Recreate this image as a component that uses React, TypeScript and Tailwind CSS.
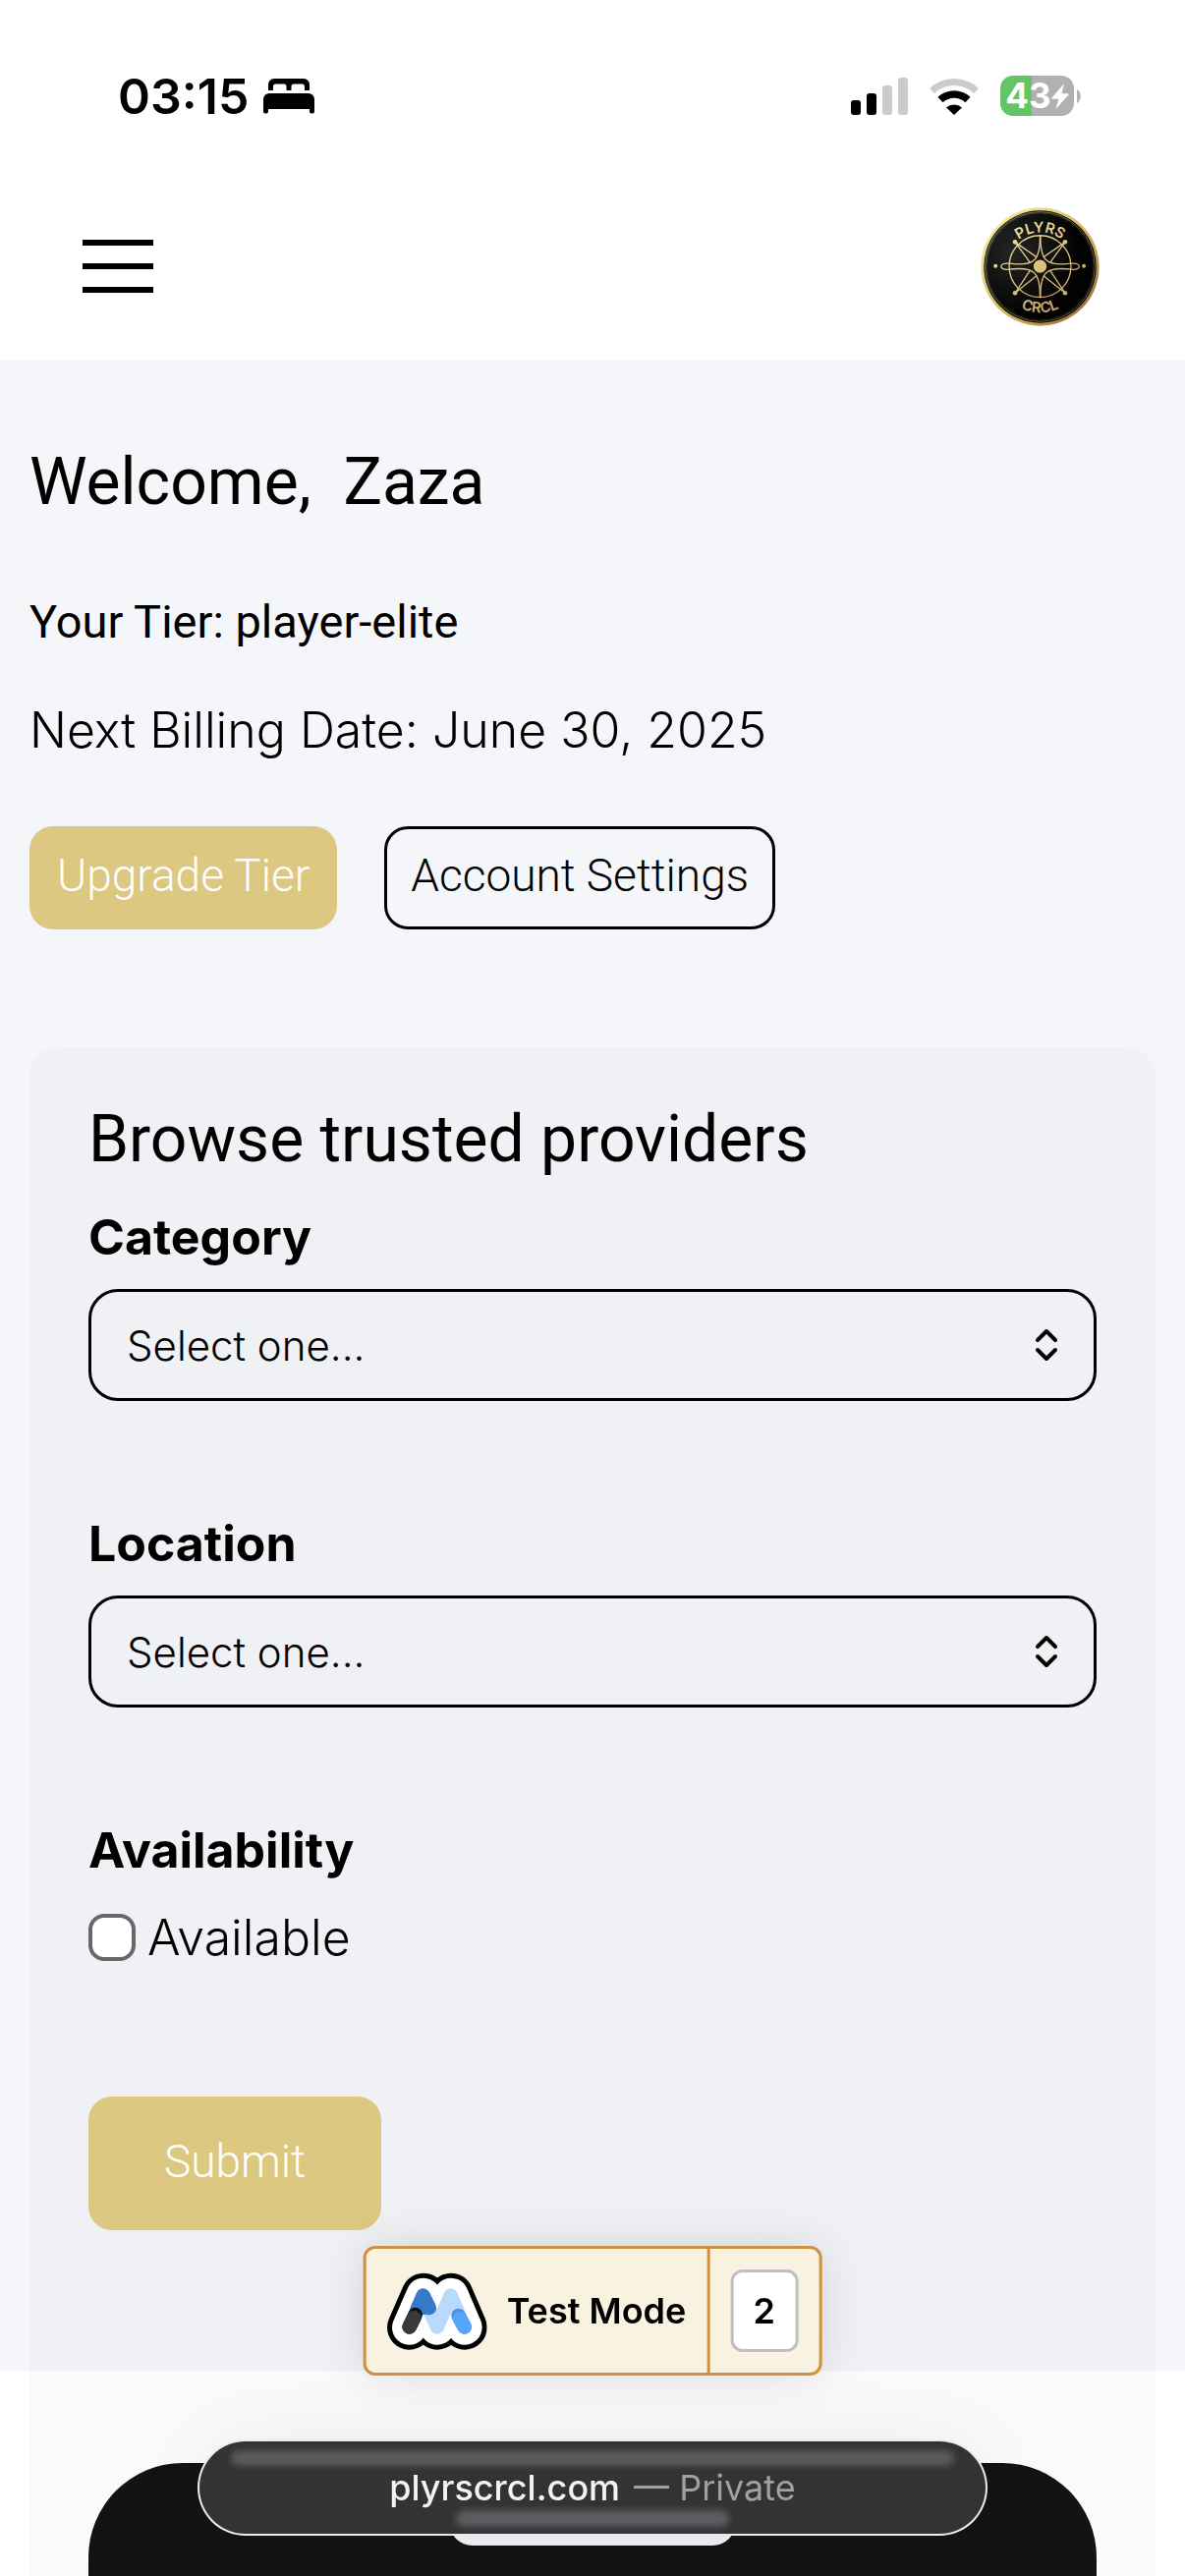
import React from "react";

function BedIcon() {
  return (
    <svg viewBox="0 0 52 36" className="h-9 w-[52px]" aria-hidden="true">
      <path d="M5 12V6a6 6 0 0 1 6-6h30a6 6 0 0 1 6 6v6h-5V8a2.500 2.500 0 0 0-2.500-2.500H31A2.500 2.500 0 0 0 28.500 8v4h-5V8A2.500 2.500 0 0 0 21 5.500h-8.500A2.500 2.500 0 0 0 10 8v4z" />
      <path d="M0 33.500V21a6 6 0 0 1 6-6h40a6 6 0 0 1 6 6v12.500a2 2 0 0 1-2 2h-1a2 2 0 0 1-2-2V31H5v2.500a2 2 0 0 1-2 2H2a2 2 0 0 1-2-2z" />
    </svg>
  );
}

function SignalIcon() {
  return (
    <svg viewBox="0 0 58 38" className="h-[38px] w-[58px]" aria-hidden="true">
      <rect x="0" y="23" width="10" height="15" rx="3" />
      <rect x="16" y="16" width="10" height="22" rx="3" />
      <rect x="32" y="8" width="10" height="30" rx="3" fill="#cbcbcb" />
      <rect x="48" y="0" width="10" height="38" rx="3" fill="#cbcbcb" />
    </svg>
  );
}

function WifiIcon() {
  return (
    <svg viewBox="0 0 52 38" className="h-[38px] w-[52px]" aria-hidden="true">
      <path d="M3.500 13.500A32.500 32.500 0 0 1 48.500 13.500" fill="none" stroke="#cbcbcb" strokeWidth="7" />
      <path d="M12 22.500A20.500 20.500 0 0 1 40 22.500" fill="none" stroke="#000" strokeWidth="7.500" />
      <path d="M18 30.500a12 12 0 0 1 16 0L26 38z" />
    </svg>
  );
}

function Battery() {
  return (
    <div className="flex items-center gap-[3px]">
      <div className="flex h-[41px] w-[75px] items-center justify-center rounded-[13px] bg-[linear-gradient(to_right,#65c466_43%,#b1b1b1_43%)] text-[35px] leading-none font-bold text-white">
        43
        <svg viewBox="0 0 18 26" className="h-[26px] w-[18px]" fill="#fff" aria-hidden="true">
          <path d="M13 0 .5 14.500a.7.7 0 0 0 .5 1.200h6.500L4.500 26 17.500 11.500a.7.7 0 0 0-.5-1.200h-6.500z" />
        </svg>
      </div>
      <svg viewBox="0 0 4 14" className="h-[14px] w-1" fill="#b1b1b1" aria-hidden="true">
        <path d="M0 0c5 2.500 5 11.500 0 14z" />
      </svg>
    </div>
  );
}

function CompassLogo() {
  const dots = [
    [131, 136], [285, 136], [131, 293], [285, 293],
  ];
  return (
    <svg viewBox="26 29 364 366" className="size-[121px]" role="img" aria-label="PLYRS CRCL">
      <defs>
        <linearGradient id="rim" x1="0" y1="0" x2="1" y2="1">
          <stop offset="0" stopColor="#fff6a8" />
          <stop offset="0.35" stopColor="#e3cf7c" />
          <stop offset="0.65" stopColor="#c8a65a" />
          <stop offset="1" stopColor="#7d5c2e" />
        </linearGradient>
        <linearGradient id="gold" gradientUnits="userSpaceOnUse" x1="80" y1="70" x2="330" y2="350">
          <stop offset="0" stopColor="#f7ecae" />
          <stop offset="0.5" stopColor="#dcc27c" />
          <stop offset="1" stopColor="#c09c58" />
        </linearGradient>
        <radialGradient id="disc" cx="0.25" cy="0.35" r="0.6">
          <stop offset="0" stopColor="#242424" />
          <stop offset="1" stopColor="#020202" />
        </radialGradient>
        <path id="arcTop" d="M101 213a107 107 0 0 1 214 0" />
        <path id="arcBottom" d="M66 211a142 142 0 0 0 284 0" />
      </defs>
      <circle cx="208" cy="212" r="182" fill="url(#rim)" />
      <circle cx="208" cy="212" r="173" fill="url(#disc)" />
      <circle cx="208" cy="212" r="169" fill="none" stroke="url(#gold)" strokeWidth="1.500" />
      <circle cx="208" cy="212" r="165" fill="none" stroke="url(#gold)" strokeWidth="1" opacity="0.6" />
      <g fill="none" stroke="url(#gold)" strokeWidth="4">
        <circle cx="208" cy="211" r="95" />
        <path d="M208 117C208 188 196 212 112 202C80 198 80 224 112 220C196 210 208 234 208 305" />
        <path d="M209 117C209 188 221 212 304 202C337 198 337 224 304 220C221 210 209 234 209 305" />
        <path d="M131 136 198 183M131 136 178 200M285 136 218 183M285 136 238 200M131 293 198 239M131 293 178 222M285 293 218 239M285 293 238 222" />
      </g>
      <g fill="url(#gold)">
        {dots.map(([x, y]) => (
          <circle key={`${x}-${y}`} cx={x} cy={y} r="7" />
        ))}
        <circle cx="71" cy="210" r="6" />
        <circle cx="343" cy="210" r="6" />
        <circle cx="208" cy="211" r="20" />
        <text fontSize="45" fontWeight="600" textAnchor="middle">
          <textPath href="#arcTop" startOffset="50%">PLYRS</textPath>
        </text>
        <text fontSize="45" fontWeight="600" textAnchor="middle">
          <textPath href="#arcBottom" startOffset="50%">CRCL</textPath>
        </text>
      </g>
    </svg>
  );
}

function MemberLogo() {
  const m = "M200 322 243 224 285 322 327 224 369 322";
  return (
    <svg
      viewBox="131 154 306 237"
      className="h-[79px] w-[102px]"
      fill="none"
      strokeLinecap="round"
      strokeLinejoin="round"
      aria-hidden="true"
    >
      <path d={m} stroke="#000" strokeWidth="136" />
      <path d={m} stroke="#fff" strokeWidth="106" />
      <path d="M264 274 285 320 326 225 347 274" stroke="#b8dbfd" strokeWidth="44" />
      <path d="M222 272 242 225 260 262" stroke="#3779c9" strokeWidth="44" />
      <path d="M228 258 240 262" stroke="#3779c9" strokeWidth="44" />
      <path d="M200 320 218 283" stroke="#111" strokeWidth="44" />
      <path d="M200 320 214 293" stroke="#393939" strokeWidth="44" />
      <path d="M368 320 350 286" stroke="#4c93dd" strokeWidth="44" />
      <path d="M368 320 354 296" stroke="#57a5f9" strokeWidth="44" />
    </svg>
  );
}

function SelectField({ id, label }: { id: string; label: string }) {
  return (
    <div className="flex flex-col gap-[17px]">
      <label htmlFor={id} className="text-[50px] leading-[72px] font-bold">
        {label}
      </label>
      <div className="relative">
        <select
          id={id}
          className="h-[114px] w-full appearance-none rounded-[30px] border-3 border-black bg-transparent pl-9 text-[42px] font-light"
        >
          <option>Select one...</option>
        </select>
        <svg
          viewBox="0 0 24 34"
          className="pointer-events-none absolute inset-y-0 right-[39px] my-auto h-[34px] w-6"
          fill="none"
          stroke="#000"
          strokeWidth="4"
          strokeLinecap="round"
          strokeLinejoin="round"
          aria-hidden="true"
        >
          <path d="M3 12 12 3l9 9M3 22l9 9 9-9" />
        </svg>
      </div>
    </div>
  );
}

export default function App() {
  return (
    <div className="flex min-h-screen flex-col bg-white font-['Inter',sans-serif] text-black">
      <div className="flex h-[175px] items-center justify-between pt-5 pr-[106px] pl-[120px]">
        <div className="flex items-center gap-[15px]">
          <span className="text-[50px] leading-none font-semibold">03:15</span>
          <BedIcon />
        </div>
        <div className="flex items-center gap-[21px]">
          <SignalIcon />
          <WifiIcon />
          <Battery />
        </div>
      </div>

      <header className="flex h-48 items-center justify-between pr-[87px] pl-[84px]">
        <button type="button" aria-label="Menu" className="flex w-[72px] flex-col gap-[18px]">
          <span className="h-1.5 bg-black" />
          <span className="h-1.5 bg-black" />
          <span className="h-1.5 bg-black" />
        </button>
        <a href="#home">
          <CompassLogo />
        </a>
      </header>

      <main className="flex flex-1 flex-col bg-[linear-gradient(to_top,#ffffff_209px,#f5f6fa_209px)] px-[30px]">
        <h1 className="pt-[86px] font-['Roboto',sans-serif] text-[66px] leading-[75px] whitespace-pre">Welcome,  Zaza</h1>
        <h2 className="mt-[79px] font-['Roboto',sans-serif] text-[47px] leading-[52px]">Your Tier: player-elite</h2>
        <p className="mt-12 text-[50px] leading-[72px] font-light">Next Billing Date: June 30, 2025</p>
        <div className="mt-[62px] flex gap-12 font-['Roboto',sans-serif] text-[46px] font-light">
          <button type="button" className="h-[105px] rounded-3xl bg-[#dcc880] px-7 pb-1 text-white">
            Upgrade Tier
          </button>
          <button type="button" className="h-[105px] rounded-3xl border-3 border-black px-6 pb-1">
            Account Settings
          </button>
        </div>

        <section className="mt-[120px] flex flex-1 flex-col rounded-t-[30px] bg-black/2 px-[60px] pt-14">
          <h2 className="font-['Roboto',sans-serif] text-[66px] leading-[75px]">Browse trusted providers</h2>
          <form className="mt-[26px] flex flex-col gap-[109px]">
            <SelectField id="category" label="Category" />
            <SelectField id="location" label="Location" />
            <fieldset>
              <legend className="text-[50px] leading-[72px] font-bold">Availability</legend>
              <label className="mt-[29px] flex h-12 items-center gap-3 text-[50px] leading-none font-light">
                <input
                  type="checkbox"
                  className="size-12 appearance-none rounded-2xl border-4 border-[#67676c] bg-white"
                />
                Available
              </label>
            </fieldset>
            <button
              type="button"
              className="mt-[29px] h-[136px] self-start rounded-3xl bg-[#dcc880] px-[77px] pb-1 font-['Roboto',sans-serif] text-[46px] font-light text-white"
            >
              Submit
            </button>
          </form>
          <div className="mt-[237px] flex flex-1 flex-col items-center rounded-t-[96px] bg-[#131313] pt-3">
            <div className="h-[72px] w-[292px] rounded-3xl bg-[#eff0f5]" />
          </div>
        </section>
      </main>

      <div className="fixed bottom-[204px] left-1/2 flex h-[132px] -translate-x-1/2 items-stretch rounded-xl border-3 border-[#cc9240] bg-[#f9f2e1] font-semibold shadow-[0_0_50px_rgba(0,0,0,0.12)]">
        <div className="flex items-center gap-5 border-r-3 border-[#cc9240] px-[21px]">
          <MemberLogo />
          <span className="text-[36px] leading-none whitespace-nowrap">Test Mode</span>
        </div>
        <div className="flex items-center px-[21px]">
          <span className="flex h-[84px] w-[69px] items-center justify-center rounded-xl border-3 border-[#c0c0c0] bg-white text-[36px]">
            2
          </span>
        </div>
      </div>

      <button
        type="button"
        className="fixed bottom-[41px] left-1/2 flex h-[98px] w-2/3 -translate-x-1/2 items-center justify-center gap-3.5 rounded-full border-2 border-white/90 bg-[#333333] text-[36px] whitespace-nowrap shadow-[0_0_80px_rgba(0,0,0,0.06)]"
      >
        <span className="absolute inset-x-[32px] top-[9px] h-4 rounded-full bg-[#5a5a5a] blur-[3px]" />
        <span className="absolute bottom-[7px] left-1/2 h-[17px] w-[278px] -translate-x-1/2 rounded-full bg-[#5c5d60] blur-[3px]" />
        <span className="relative font-medium text-[#f3f3f3]">plyrscrcl.com</span>
        <span className="relative text-[#a0a0a0]">— Private</span>
      </button>
    </div>
  );
}
